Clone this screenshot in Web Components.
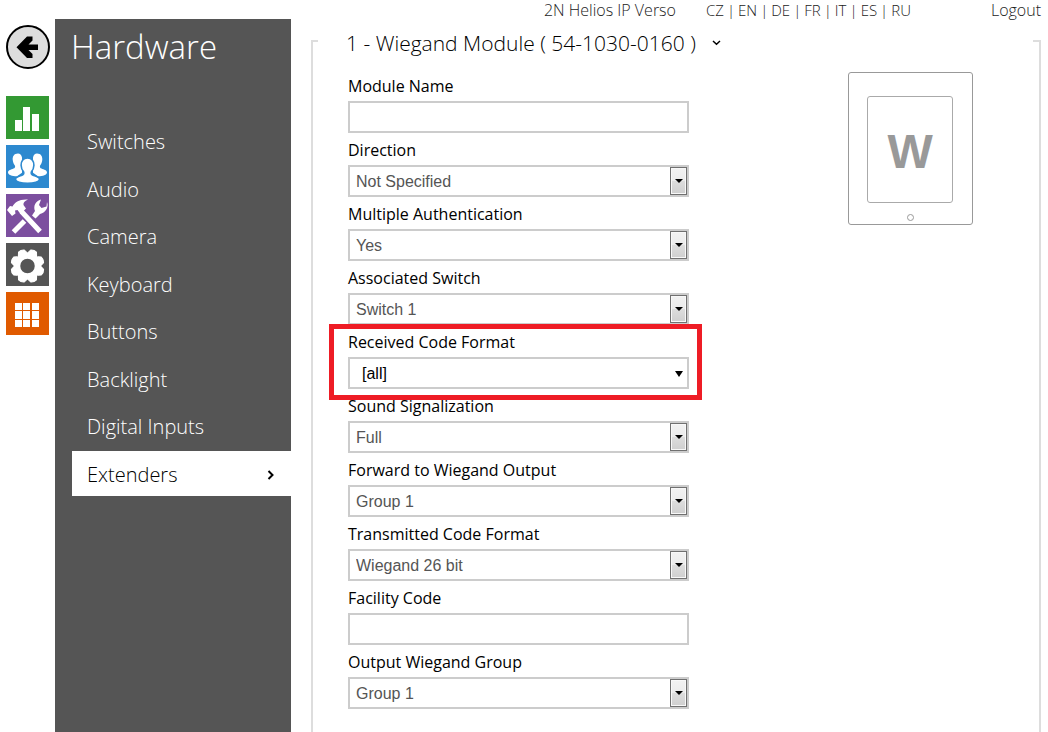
<!DOCTYPE html>
<html lang="en">
<head>
<meta charset="utf-8">
<title>2N Helios IP Verso - Hardware</title>
<style>
    body {
        margin: 0;
        background: #fff;
        color: #000;
        font-family: "Open Sans", "Noto Sans", sans-serif;
        font-size: 16px;
    }
</style>
</head>
<body>
<helios-app>
    <icon-rail slot="rail"></icon-rail>
    <side-menu slot="menu" heading="Hardware">
        <menu-item>Switches</menu-item>
        <menu-item>Audio</menu-item>
        <menu-item>Camera</menu-item>
        <menu-item>Keyboard</menu-item>
        <menu-item>Buttons</menu-item>
        <menu-item>Backlight</menu-item>
        <menu-item>Digital Inputs</menu-item>
        <menu-item active>Extenders</menu-item>
    </side-menu>
    <top-bar slot="top" languages="CZ,EN,DE,FR,IT,ES,RU">2N Helios IP Verso</top-bar>
    <module-panel heading="1 - Wiegand Module ( 54-1030-0160 )">
        <form-field label="Module Name"></form-field>
        <form-field label="Direction" options="Not Specified"></form-field>
        <form-field label="Multiple Authentication" options="Yes,No"></form-field>
        <form-field label="Associated Switch" options="Switch 1,Switch 2"></form-field>
        <form-field label="Received Code Format" options="[all]" plain highlight></form-field>
        <form-field label="Sound Signalization" options="Full"></form-field>
        <form-field label="Forward to Wiegand Output" options="Group 1,Group 2"></form-field>
        <form-field label="Transmitted Code Format" options="Wiegand 26 bit"></form-field>
        <form-field label="Facility Code"></form-field>
        <form-field label="Output Wiegand Group" options="Group 1,Group 2"></form-field>
        <module-picture slot="picture" letter="W"></module-picture>
    </module-panel>
</helios-app>

<script>
class HeliosApp extends HTMLElement {
    constructor() {
        super();
        this.attachShadow({mode: 'open'}).innerHTML = `
        <style>
            :host {
                display: grid;
                grid-template-columns: 55px 236px minmax(0, 1fr);
                grid-template-rows: 19px 1fr;
                min-height: 100vh;
            }
            slot[name=top]::slotted(*) { grid-column: 1 / -1; }
        </style>
        <slot name="top"></slot>
        <slot name="rail"></slot>
        <slot name="menu"></slot>
        <slot></slot>`;
    }
}

class TopBar extends HTMLElement {
    connectedCallback() {
        const links = this.getAttribute('languages').split(',')
            .map(code => `<a href="#${code}">${code}</a>`)
            .join('<span>|</span>');
        this.attachShadow({mode: 'open'}).innerHTML = `
        <style>
            :host {
                display: flex;
                justify-content: flex-end;
                padding-right: 7px;
                line-height: 20px;
                font-weight: 300;
                color: #222;
                white-space: nowrap;
            }
            a { color: inherit; text-decoration: none; }
            nav {
                display: flex;
                gap: 3px;
                margin: 0 80px 0 30px;
                font-size: 15px;
            }
        </style>
        <span><slot></slot></span>
        <nav>${links}</nav>
        <a href="#logout">Logout</a>`;
    }
}

// Eight rounded teeth on a ring.
function gear() {
    const teeth = [];
    for (let i = 0; i < 8; i++) {
        teeth.push(`<path d="M17 10 18.500 6.800Q21.500 5.400 24.500 6.800L26 10z" transform="rotate(${i * 45 + 22.5} 21.500 23)"/>`);
    }
    return `<g fill="#fff" stroke="#fff" stroke-linejoin="round">${teeth.join('')}</g>
        <circle cx="21.500" cy="23" r="10.500" fill="none" stroke="#fff" stroke-width="6.500"/>`;
}

const RAIL_ICONS = [
    {
        name: 'Status', color: '#339933',
        svg: '<path fill="#fff" d="M9 24h7v11H9zM17 11h7v24h-7zM26 18h7v17h-7z"/>'
    },
    {
        name: 'Directory', color: '#2d89cf',
        svg: `<g fill="#fff">
            <path d="M12 8.500c-4 0-5.500 3-5.300 6.200.2 2.600 1.200 4.500 2.300 6 .4 1.500-.2 2.300-1.500 2.900C5 24.700 2 25.500 2 27.500c0 2.300 4 3.700 9 3.700l5-3.400V12.500c-.5-2.500-2-4-4-4z"/>
            <path d="M31 8.500c4 0 5.500 3 5.300 6.200-.2 2.600-1.200 4.500-2.300 6-.4 1.500.2 2.300 1.500 2.900 2.500 1.100 5.500 1.900 5.500 3.900 0 2.300-4 3.700-9 3.700l-5-3.400V12.500c.5-2.500 2-4 4-4z"/>
            <path stroke="#2d89cf" stroke-width="1.600" d="M21.500 13c-4.500 0-6.600 3.400-6.400 7.300.1 2.800 1 5 2.500 6.600.6 1.600 0 2.700-1.600 3.300-3 1.100-6.500 1.800-6.500 4 0 2.400 5.500 4.100 12 4.100s12-1.700 12-4.100c0-2.200-3.500-2.900-6.500-4-1.600-.6-2.200-1.700-1.600-3.300 1.500-1.600 2.400-3.800 2.500-6.600.2-3.900-1.900-7.300-6.400-7.300z"/>
        </g>`
    },
    {
        name: 'Hardware', color: '#7c4f9f',
        svg: `<path fill="none" stroke="#fff" stroke-width="5" d="M7.500 38 18.500 27M15.500 17.500 34 37.500"/>
            <path fill="#fff" d="M1 16 4 12 6.500 12.500C9 8 13 5 22 5.500 18.500 7 17 9 17.500 11L20 14.500 14.500 20 11.500 16 9 16.500 9.500 19.500 6 22z"/>
            <path fill="#fff" d="M26 21.500 29 17C27 12 29.500 7 35 5.500L33 11 35.500 14 40.500 12.500 41 8C43 13 40 18.500 34 20L29.500 24.500z"/>`
    },
    {
        name: 'Services', color: '#555',
        svg: gear()
    },
    {
        name: 'System', color: '#e05a00',
        svg: '<path fill="#fff" d="M9 11h7v7H9zM17 11h7v7h-7zM26 11h7v7h-7zM9 19h7v8H9zM17 19h7v8h-7zM26 19h7v8h-7zM9 28h7v7H9zM17 28h7v7h-7zM26 28h7v7h-7z"/>'
    }
];

class IconRail extends HTMLElement {
    constructor() {
        super();
        const tiles = RAIL_ICONS.map(icon => `
            <a href="#${icon.name}" aria-label="${icon.name}" style="background: ${icon.color}">
                <svg width="43" height="43" viewBox="0 0 43 43">${icon.svg}</svg>
            </a>`).join('');
        this.attachShadow({mode: 'open'}).innerHTML = `
        <style>
            :host {
                display: flex;
                flex-direction: column;
                gap: 6px;
                padding: 6px;
            }
            button {
                width: 44px;
                height: 44px;
                margin: 0 0 21px;
                padding: 0;
                border: 0;
                background: none;
            }
            a { width: 43px; height: 43px; }
            svg { display: block; }
        </style>
        <button aria-label="Back">
            <svg width="44" height="44" viewBox="0 0 44 44">
                <circle cx="22" cy="22" r="21" fill="#ddd" stroke="#000" stroke-width="2"/>
                <path d="M10.500 22.200 21 11.500h5.500v4L22.500 19.500H32v5.500h-9.500l4 4v4H21z"/>
            </svg>
        </button>
        ${tiles}`;
    }
}

class SideMenu extends HTMLElement {
    connectedCallback() {
        this.attachShadow({mode: 'open'}).innerHTML = `
        <style>
            :host {
                display: block;
                background: #555;
                color: #fff;
            }
            h1 {
                margin: 0 0 43px;
                padding-left: 16px;
                font-size: 33px;
                font-weight: 300;
                line-height: 56px;
            }
            nav {
                display: flex;
                flex-direction: column;
                justify-content: space-between;
                min-height: 378px;
                padding-left: 17px;
            }
        </style>
        <h1>${this.getAttribute('heading')}</h1>
        <nav><slot></slot></nav>`;
    }
}

class MenuItem extends HTMLElement {
    constructor() {
        super();
        this.attachShadow({mode: 'open'}).innerHTML = `
        <style>
            :host { display: block; }
            a {
                display: flex;
                align-items: center;
                justify-content: space-between;
                padding: 3px 16px 0 15px;
                color: inherit;
                font-size: 20px;
                font-weight: 300;
                line-height: 42px;
                text-decoration: none;
            }
            svg { display: none; }
            :host([active]) a { background: #fff; color: #000; }
            :host([active]) svg { display: block; }
        </style>
        <a href="#"><slot></slot>
            <svg width="8" height="10" viewBox="0 0 8 10"><path d="M1.500 1 5.500 5 1.500 9" fill="none" stroke="#000" stroke-width="2"/></svg>
        </a>`;
    }
}

class ModulePanel extends HTMLElement {
    connectedCallback() {
        this.attachShadow({mode: 'open'}).innerHTML = `
        <style>
            :host {
                --line: #ddd;
                display: block;
                margin: 21px 7px 0 20px;
                border: solid var(--line);
                border-width: 0 2px;
                background:
                    linear-gradient(var(--line), var(--line)) left top / 5px 2px no-repeat,
                    linear-gradient(var(--line), var(--line)) right top / 6px 2px no-repeat;
            }
            h2 {
                display: flex;
                align-items: center;
                gap: 16px;
                margin: -12px 0 11px;
                padding-left: 33px;
                font-size: 21px;
                font-weight: 300;
                line-height: 30px;
                white-space: nowrap;
            }
            .content {
                display: grid;
                grid-template-columns: minmax(0, 341fr) minmax(0, 349fr);
                align-items: start;
                padding-left: 35px;
            }
            .picture {
                display: flex;
                justify-content: center;
                padding: 3px 0 0 92px;
            }
        </style>
        <h2>${this.getAttribute('heading')}
            <svg width="9" height="6" viewBox="0 0 9 6"><path d="M1 1 4.500 4.200 8 1" fill="none" stroke="#000" stroke-width="1.500"/></svg>
        </h2>
        <div class="content">
            <div><slot></slot></div>
            <div class="picture"><slot name="picture"></slot></div>
        </div>`;
    }
}

class FormField extends HTMLElement {
    get control() {
        if (!this.hasAttribute('options')) {
            return '<input id="control" type="text">';
        }
        const options = this.getAttribute('options').split(',')
            .map(text => `<option>${text}</option>`)
            .join('');
        return `<select id="control">${options}</select><span class="arrow"></span>`;
    }
    connectedCallback() {
        this.attachShadow({mode: 'open'}).innerHTML = `
        <style>
            :host {
                display: block;
                position: relative;
            }
            label {
                display: block;
                padding-top: 2px;
                line-height: 30px;
            }
            .box { position: relative; }
            input, select {
                display: block;
                box-sizing: border-box;
                width: 100%;
                height: 32px;
                margin: 0;
                padding: 0 6px;
                border: 2px solid #ccc;
                border-radius: 0;
                background: #fff;
                color: #555;
                font-family: "Liberation Sans", Arial, sans-serif;
                font-size: 16px;
                appearance: none;
            }
            .arrow {
                position: absolute;
                top: 2px;
                right: 2px;
                bottom: 2px;
                display: grid;
                place-items: center;
                box-sizing: border-box;
                width: 17px;
                border: 1px solid #707070;
                box-shadow: inset 0 0 0 1px #f8f8f8;
                background: linear-gradient(#f2f2f2, #ebebeb 50%, #ddd 50%, #cfcfcf);
                pointer-events: none;
            }
            .arrow::before {
                content: "";
                border: solid transparent;
                border-width: 4px 4px 0;
                border-top-color: #000;
            }
            :host([plain]) select {
                padding-left: 12px;
                color: #000;
            }
            :host([plain]) .arrow {
                top: 4px;
                border: 0;
                box-shadow: none;
                background: none;
            }
            :host([plain]) .arrow::before { border-top-width: 6px; }
            :host([highlight]) { z-index: 1; }
            :host([highlight])::after {
                content: "";
                position: absolute;
                inset: -1px -13px -11px -19px;
                border: 5px solid #ee1c25;
                pointer-events: none;
            }
        </style>
        <label for="control">${this.getAttribute('label')}</label>
        <div class="box">${this.control}</div>`;
    }
}

class ModulePicture extends HTMLElement {
    connectedCallback() {
        this.attachShadow({mode: 'open'}).innerHTML = `
        <style>
            :host {
                display: flex;
                flex-direction: column;
                align-items: center;
                justify-content: space-between;
                box-sizing: border-box;
                width: 125px;
                height: 153px;
                padding: 23px 0 3px;
                border: 1px solid #999;
                border-radius: 3px;
            }
            .screen {
                display: grid;
                place-items: center;
                box-sizing: border-box;
                width: 86px;
                height: 107px;
                padding-top: 4px;
                border: 1px solid #aaa;
                border-radius: 3px;
                color: #999;
                font: bold 48px "Liberation Sans", Arial, sans-serif;
            }
            .home {
                box-sizing: border-box;
                width: 7px;
                height: 7px;
                border: 1px solid #999;
                border-radius: 50%;
            }
        </style>
        <div class="screen">${this.getAttribute('letter')}</div>
        <div class="home"></div>`;
    }
}

customElements.define('helios-app', HeliosApp);
customElements.define('top-bar', TopBar);
customElements.define('icon-rail', IconRail);
customElements.define('side-menu', SideMenu);
customElements.define('menu-item', MenuItem);
customElements.define('module-panel', ModulePanel);
customElements.define('form-field', FormField);
customElements.define('module-picture', ModulePicture);
</script>
</body>
</html>
